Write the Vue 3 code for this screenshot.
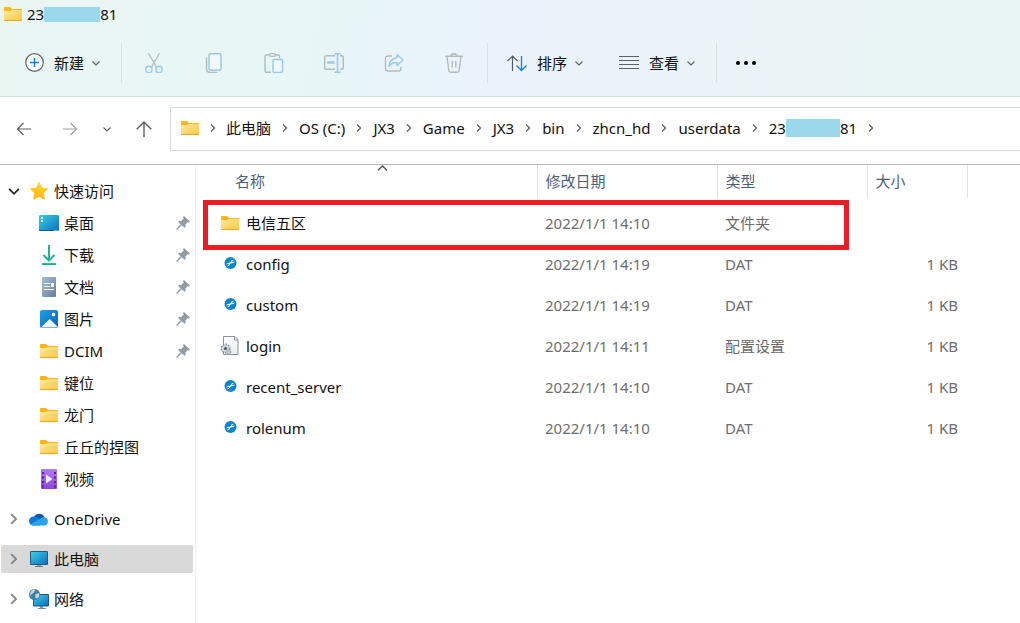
<script setup>
const edits = [
  { icon: 'cut', label: '剪切' },
  { icon: 'copy', label: '复制' },
  { icon: 'paste', label: '粘贴' },
  { icon: 'rename', label: '重命名' },
  { icon: 'share', label: '共享' },
  { icon: 'trash', label: '删除' },
]
const crumbs = ['此电脑', 'OS (C:)', 'JX3', 'Game', 'JX3', 'bin', 'zhcn_hd', 'userdata']
const quick = [
  { icon: 'desktop', name: '桌面', pinned: true },
  { icon: 'download', name: '下载', pinned: true },
  { icon: 'document', name: '文档', pinned: true },
  { icon: 'picture', name: '图片', pinned: true },
  { icon: 'folder', name: 'DCIM', pinned: true },
  { icon: 'folder', name: '键位' },
  { icon: 'folder', name: '龙门' },
  { icon: 'folder', name: '丘丘的捏图' },
  { icon: 'video', name: '视频' },
]
const roots = [
  { icon: 'cloud', name: 'OneDrive' },
  { icon: 'pc', name: '此电脑', active: true },
  { icon: 'network', name: '网络' },
]
const files = [
  { icon: 'folder', name: '电信五区', date: '2022/1/1 14:10', type: '文件夹', size: '' },
  { icon: 'dat', name: 'config', date: '2022/1/1 14:19', type: 'DAT', size: '1 KB' },
  { icon: 'dat', name: 'custom', date: '2022/1/1 14:19', type: 'DAT', size: '1 KB' },
  { icon: 'ini', name: 'login', date: '2022/1/1 14:11', type: '配置设置', size: '1 KB' },
  { icon: 'dat', name: 'recent_server', date: '2022/1/1 14:10', type: 'DAT', size: '1 KB' },
  { icon: 'dat', name: 'rolenum', date: '2022/1/1 14:10', type: 'DAT', size: '1 KB' },
]
</script>

<template>
  <div class="window">
    <svg class="defs" aria-hidden="true">
      <defs>
        <linearGradient id="gFolder" x1="0" y1="0" x2="1" y2="1"><stop offset="0" stop-color="#ffe8a0" /><stop offset="1" stop-color="#fdc83e" /></linearGradient>
        <linearGradient id="gDesk" x1="0" y1="0" x2="1" y2="1"><stop offset="0" stop-color="#37d0de" /><stop offset="1" stop-color="#0f6fc4" /></linearGradient>
        <linearGradient id="gDown" x1="0" y1="0" x2="0" y2="1"><stop offset="0" stop-color="#3cc78c" /><stop offset="1" stop-color="#12a195" /></linearGradient>
        <linearGradient id="gDoc" x1="0" y1="0" x2="1" y2="1"><stop offset="0" stop-color="#a8bdd3" /><stop offset="1" stop-color="#647f9f" /></linearGradient>
        <linearGradient id="gPic" x1="0" y1="0" x2="1" y2="1"><stop offset="0" stop-color="#1f9fe3" /><stop offset="1" stop-color="#0b62b8" /></linearGradient>
        <linearGradient id="gVideo" x1="0" y1="0" x2="0" y2="1"><stop offset="0" stop-color="#b07cf0" /><stop offset="1" stop-color="#8a45dc" /></linearGradient>
        <linearGradient id="gStar" x1="0" y1="0" x2="0" y2="1"><stop offset="0" stop-color="#ffd52b" /><stop offset="1" stop-color="#fdb813" /></linearGradient>
        <linearGradient id="gPage" x1="0" y1="0" x2="1" y2="1"><stop offset="0" stop-color="#ffffff" /><stop offset="1" stop-color="#e8ecf1" /></linearGradient>
      </defs>
      <symbol id="i-folder" viewBox="0 0 20 20">
        <path d="M1 4q0-1 1-1h5l2 2h10v3H1z" fill="#f8b619" />
        <path d="M1 7h6l2-1h10v10q0 1-1 1H2q-1 0-1-1z" fill="url(#gFolder)" />
        <path d="M1 16h18q0 1-1 1H2q-1 0-1-1z" fill="#eaa92a" />
      </symbol>
      <symbol id="i-star" viewBox="0 0 20 20">
        <path d="M10 1.500l2.600 5.600 6 .8-4.400 4.200 1.100 6.100L10 15.200l-5.300 3 1.100-6.100L1.400 7.900l6-.8z" fill="url(#gStar)" stroke="url(#gStar)" stroke-linejoin="round" />
      </symbol>
      <symbol id="i-desktop" viewBox="0 0 20 20">
        <rect y="2" width="20" height="16" rx="1" fill="url(#gDesk)" />
        <path d="M2 4h2v2H2zM2 7h2v2H2z" fill="#d9fbff" />
        <path d="M0 17h15v1H1q-1 0-1-1z" fill="#0f5a91" />
        <path d="M15.500 17.500h1M17.500 17.500h1" stroke="#c4eaff" />
      </symbol>
      <symbol id="i-download" viewBox="0 0 20 20">
        <path d="M10 0v15M4.500 10l5.500 5.500 5.500-5.500" fill="none" stroke="#26b391" stroke-width="2" />
        <rect x="3" y="18" width="14" height="2" fill="url(#gDown)" />
      </symbol>
      <symbol id="i-document" viewBox="0 0 20 20">
        <rect x="3" y="0" width="14" height="20" rx="1" fill="url(#gDoc)" />
        <path d="M5 6.500h6M5 9.500h6M5 12.500h10" stroke="#fff" />
        <rect x="12" y="6" width="3" height="4" fill="#fff" />
      </symbol>
      <symbol id="i-picture" viewBox="0 0 20 20">
        <rect x="1" y="1" width="18" height="18" rx="2" fill="url(#gPic)" />
        <path d="M2 18.500l8-8q.7-.5 1.300 0l7 7-.8 1H3z" fill="#eef8ff" />
        <circle cx="14.500" cy="5.500" r="1.700" fill="#fff" />
      </symbol>
      <symbol id="i-video" viewBox="0 0 20 20">
        <rect x="2" y="0" width="16" height="20" rx="1" fill="url(#gVideo)" />
        <path d="M4 3v16M16 3v16" stroke="#5a219b" stroke-width="2" stroke-dasharray="2 2.500" />
        <path d="M7 5.500l6.500 4.500L7 14.500z" fill="#f4eaff" />
      </symbol>
      <symbol id="i-cloud" viewBox="0 0 20 20">
        <path d="M5 7.500a6 6 0 0 1 10.500.5L10 12z" fill="#0a59ad" />
        <path d="M4.500 16.500a4.500 4.500 0 0 1 0-9q2-.3 4 1l6 4-4 4z" fill="#0f78d4" />
        <path d="M15 8a4.400 4.400 0 0 1 1 8.500H4.500q-2 0-3.200-1.500L11 10q2-2 4-2z" fill="#28a5ea" />
      </symbol>
      <symbol id="i-pc" viewBox="0 0 20 20">
        <path d="M8 15h4v3H8z" fill="#8f9ba5" /><path d="M6 17.500h8" stroke="#6b7780" />
        <rect x="1" y="2" width="18" height="14" rx="1" fill="#27597c" />
        <rect x="2" y="3" width="16" height="12" fill="url(#gDesk)" />
      </symbol>
      <symbol id="i-network" viewBox="0 0 20 20">
        <path d="M11 16h3v3h-3z" fill="#8f9ba5" /><path d="M9 19.500h8" stroke="#7d8992" />
        <rect x="4" y="5" width="16" height="12.500" rx="1" fill="#27597c" />
        <rect x="5" y="6" width="14" height="10.500" fill="url(#gDesk)" />
        <circle cx="5.500" cy="5.500" r="5.500" fill="#437f9f" />
        <path d="M1 4q2-4 5-3.500L5.500 3 3 5 1.500 7zM6 5.500l4-1.500q1 3-1.500 5.500L6.500 9z" fill="#b9d8e4" />
      </symbol>
      <symbol id="i-dat" viewBox="0 0 20 20">
        <circle cx="10.500" cy="9" r="6" fill="#0a84d0" />
        <path d="M8.500 10.200l4-2.400" stroke="#e8f7ff" stroke-width="1.500" />
        <path d="M6.600 10l2-.8 1 1.800-2.200 1M14.400 8l-2 .8-1-1.800 2.200-1" fill="none" stroke="#e8f7ff" stroke-width="1" />
      </symbol>
      <symbol id="i-ini" viewBox="0 0 20 20">
        <path d="M3.500 .5H15l3 3v15H3.500z" fill="url(#gPage)" stroke="#8e9297" />
        <path d="M14.500 .5v3.500H18" fill="none" stroke="#8e9297" />
        <circle cx="5.500" cy="12.500" r="4" fill="#d3dade" stroke="#899298" stroke-width="2" stroke-dasharray="1.600 1" />
        <circle cx="5.500" cy="12.500" r="3.500" fill="#cbd4da" />
        <circle cx="5.500" cy="12.500" r="1.500" fill="#4b565e" />
        <circle cx="9" cy="16" r="2" fill="#c2cbd1" stroke="#899298" stroke-dasharray="1 1" />
      </symbol>
      <symbol id="i-pin" viewBox="0 0 14 14">
        <path d="M8 0l6 5.500-1 1-1.500-.2-2 2.200q.5 2-.5 3.500L5.700 9.300 1.500 13.500 0 14l.6-1.500 4-4.300L2 5.500Q3.500 4.300 5.500 4.800L7.700 2.500 7.200 1z" fill="#919ca4" />
      </symbol>
      <symbol id="i-down" viewBox="0 0 10 10"><path d="M1.500 3.500L5 7l3.500-3.500" fill="none" stroke="currentColor" stroke-width="1.200" /></symbol>
      <symbol id="i-right" viewBox="0 0 10 10"><path d="M3 1.500L6.500 5 3 8.500" fill="none" stroke="currentColor" stroke-width="1.300" /></symbol>
      <symbol id="i-add" viewBox="0 0 20 20">
        <circle cx="10.500" cy="9.500" r="8.800" fill="#fafdff" stroke="#606466" stroke-width="1.200" />
        <path d="M6 9.500h9M10.500 5v9" stroke="#1080dd" stroke-width="1.500" />
      </symbol>
      <symbol id="i-cut" viewBox="0 0 20 20">
        <path d="M4.500 .5l8 13.500M15.500 .5l-8 13.500" stroke="#b3bbbc" stroke-width="1.300" />
        <circle cx="4.800" cy="16.500" r="3.200" fill="none" stroke="#94c9ec" stroke-width="1.400" />
        <circle cx="15" cy="16.500" r="3.200" fill="none" stroke="#94c9ec" stroke-width="1.400" />
      </symbol>
      <symbol id="i-copy" viewBox="0 0 20 20">
        <path d="M2.500 4.500v11q0 4 4 4h7" fill="none" stroke="#b3bbbc" stroke-width="1.400" />
        <rect x="5" y=".7" width="12" height="16.500" rx="2" fill="#f2f8fa" stroke="#94c9ec" stroke-width="1.400" />
      </symbol>
      <symbol id="i-paste" viewBox="0 0 20 20">
        <path d="M6 2H2.500Q1 2 1 3.500v14.300q0 1.500 1.500 1.500H7M12 2h2q1.500 0 1.500 1.500V5" fill="none" stroke="#b3bbbc" stroke-width="1.400" />
        <rect x="5.500" y=".7" width="6" height="2.600" rx="1.300" fill="#e8f5f7" stroke="#b3bbbc" stroke-width="1.300" />
        <rect x="9" y="6.500" width="9.500" height="13" rx="1.500" fill="#f2f8fa" stroke="#94c9ec" stroke-width="1.400" />
      </symbol>
      <symbol id="i-rename" viewBox="0 0 20 20">
        <path d="M11 2.700H2.500Q.7 2.700.7 4.500v10q0 1.800 1.800 1.800H11M16 2.700h1.500q1.800 0 1.800 1.800v10q0 1.800-1.800 1.800H16" fill="none" stroke="#b3bbbc" stroke-width="1.400" />
        <path d="M3 9.500h7.500" stroke="#94c9ec" stroke-width="2.500" />
        <path d="M13.500 1v18M10.500 .7h6M10.500 19.300h6" stroke="#94c9ec" stroke-width="1.500" />
      </symbol>
      <symbol id="i-share" viewBox="0 0 20 20">
        <path d="M8 3H4Q1.500 3 1.500 5.500v10Q1.500 18 4 18h10.500q2.500 0 2.500-2.500V14" fill="none" stroke="#b3bbbc" stroke-width="1.400" />
        <path d="M13 1.500l6 5.500-6 5.500V9.500q-5-.5-8 4Q5.500 6 13 4.700z" fill="#f0f8fd" stroke="#94c9ec" stroke-width="1.400" stroke-linejoin="round" />
      </symbol>
      <symbol id="i-trash" viewBox="0 0 20 20">
        <path d="M1 3.200h18M7 3q0-2.300 3-2.300T13 3M3 3.500l1.800 14q.2 1.800 2 1.800h6.400q1.800 0 2-1.800l1.800-14M8.200 8v6.500M11.800 8v6.500" fill="none" stroke="#b3bbbc" stroke-width="1.400" />
      </symbol>
      <symbol id="i-sort" viewBox="0 0 20 20">
        <path d="M5.500 18V3M.5 8l5-5 5 5" fill="none" stroke="#555a5e" stroke-width="1.200" />
        <path d="M14.500 3v14.500M9.500 12.500l5 5 5-5" fill="none" stroke="#1080dd" stroke-width="1.300" />
      </symbol>
      <symbol id="i-view" viewBox="0 0 20 20"><path d="M0 3.500h20M0 7.500h20M0 11.500h20M0 15.500h20" stroke="#5b6064" stroke-width="1.200" /></symbol>
      <symbol id="i-more" viewBox="0 0 20 20"><circle cx="2" cy="10" r="2" /><circle cx="10" cy="10" r="2" /><circle cx="18" cy="10" r="2" /></symbol>
      <symbol id="i-back" viewBox="0 0 16 16"><path d="M15 8H1.500M7.500 2l-6 6 6 6" fill="none" stroke="currentColor" stroke-width="1.200" /></symbol>
      <symbol id="i-forward" viewBox="0 0 16 16"><path d="M1 8h13.500M8.500 2l6 6-6 6" fill="none" stroke="currentColor" stroke-width="1.200" /></symbol>
      <symbol id="i-up" viewBox="0 0 16 16"><path d="M8 16V1M.7 8.300L8 1l7.300 7.300" fill="none" stroke="currentColor" stroke-width="1.400" /></symbol>
    </svg>

    <header class="top">
      <div class="title">
        <svg class="icon"><use href="#i-folder" /></svg>
        <span class="masked">23<i class="mask wide"></i>81</span>
      </div>
      <div class="toolbar">
        <button class="command"><svg class="icon"><use href="#i-add" /></svg>新建<svg class="chev"><use href="#i-down" /></svg></button>
        <span class="sep"></span>
        <div class="edits">
          <button v-for="e in edits" :key="e.icon" class="edit" :aria-label="e.label" disabled>
            <svg class="icon"><use :href="'#i-' + e.icon" /></svg>
          </button>
        </div>
        <span class="sep"></span>
        <button class="command"><svg class="icon"><use href="#i-sort" /></svg>排序<svg class="chev"><use href="#i-down" /></svg></button>
        <button class="command view"><svg class="icon"><use href="#i-view" /></svg>查看<svg class="chev"><use href="#i-down" /></svg></button>
        <span class="sep"></span>
        <button class="command" aria-label="更多"><svg class="icon"><use href="#i-more" /></svg></button>
      </div>
    </header>

    <nav class="nav">
      <div class="travel">
        <button aria-label="后退" class="back"><svg class="arrow"><use href="#i-back" /></svg></button>
        <button aria-label="前进" class="faint"><svg class="arrow"><use href="#i-forward" /></svg></button>
        <button aria-label="最近位置"><svg class="chev"><use href="#i-down" /></svg></button>
        <button aria-label="向上"><svg class="arrow"><use href="#i-up" /></svg></button>
      </div>
      <div class="address">
        <svg class="icon"><use href="#i-folder" /></svg>
        <svg class="chev first"><use href="#i-right" /></svg>
        <template v-for="(c, i) in crumbs" :key="i">
          <a href="#">{{ c }}</a>
          <svg class="chev"><use href="#i-right" /></svg>
        </template>
        <a href="#" class="masked">23<i class="mask"></i>81</a>
        <svg class="chev"><use href="#i-right" /></svg>
      </div>
    </nav>

    <div class="body">
      <aside class="side">
        <a href="#" class="root quick"><svg class="chev dark"><use href="#i-down" /></svg><svg class="icon"><use href="#i-star" /></svg>快速访问</a>
        <a v-for="q in quick" :key="q.name" href="#" class="item">
          <svg class="icon"><use :href="'#i-' + q.icon" /></svg>
          <span class="label">{{ q.name }}</span>
          <svg v-if="q.pinned" class="pin"><use href="#i-pin" /></svg>
        </a>
        <a v-for="r in roots" :key="r.name" href="#" class="root" :class="{ active: r.active }">
          <svg class="chev"><use href="#i-right" /></svg><svg class="icon"><use :href="'#i-' + r.icon" /></svg>{{ r.name }}
        </a>
      </aside>

      <main class="pane">
        <table>
          <colgroup><col class="c-name" /><col class="c-date" /><col class="c-type" /><col class="c-size" /><col /></colgroup>
          <thead>
            <tr>
              <th class="name">名称<svg class="chev sorted"><use href="#i-down" /></svg></th>
              <th>修改日期</th>
              <th>类型</th>
              <th>大小</th>
              <td></td>
            </tr>
          </thead>
          <tbody>
            <tr v-for="f in files" :key="f.name">
              <td class="name"><div class="file"><svg class="icon"><use :href="'#i-' + f.icon" /></svg>{{ f.name }}</div></td>
              <td>{{ f.date }}</td>
              <td>{{ f.type }}</td>
              <td class="size">{{ f.size }}</td>
              <td></td>
            </tr>
          </tbody>
        </table>
        <div class="marker"></div>
      </main>
    </div>
  </div>
</template>

<style>
body { margin: 0; background: #fff; }
</style>

<style scoped>
* { box-sizing: border-box; }
.window {
  min-height: 100vh;
  display: flex;
  flex-direction: column;
  overflow: hidden;
  background: #fff;
  color: #111;
  font: 15px/20px "Noto Sans", "Noto Sans CJK SC", sans-serif;
}
.defs { position: absolute; width: 0; height: 0; }
svg { display: block; flex: none; }
.icon { width: 20px; height: 20px; }
.arrow { width: 16px; height: 16px; }
.chev { width: 10px; height: 10px; color: #5c6063; }
a { color: inherit; text-decoration: none; }
button { display: flex; align-items: center; padding: 0; border: 0; background: none; color: inherit; font: inherit; }

.top {
  border-bottom: 1px solid #d5dfe0;
  background: linear-gradient(100deg, #ebf6f3 0%, #e7f6f6 28%, #eaf3fb 46%, #ebf3f8 72%, #e8f5f3 100%);
}
.title { display: flex; align-items: center; gap: 4px; height: 28px; padding-left: 3px; }
.masked { display: flex; align-items: center; }
.mask { width: 54px; height: 18px; background: #9bd9ea; }
.mask.wide { width: 56px; height: 15px; }
.toolbar { display: flex; align-items: center; height: 68px; padding: 2px 0 0 24px; }
.command { gap: 10px; }
.command .chev { margin-left: -3px; }
.view { margin-left: 35px; }
.sep { width: 1px; height: 40px; margin: 0 19px 0 20px; background: #d7e1e3; }
.edits { display: flex; margin: 0 -17px; }
.edit { justify-content: center; width: 60px; height: 40px; }

.nav { display: flex; padding: 10px 0 13px; border-bottom: 1px solid #bbb; }
.travel { display: flex; align-items: center; gap: 24px; margin: 0 18px 0 16px; color: #5c6063; }
.back { margin-right: 6px; }
.faint { color: #a0a0a0; }
.address { flex: 1; display: flex; align-items: center; gap: 9px; height: 44px; padding: 0 0 2px 9px; border: 1px solid #d9d9d9; border-right: 0; white-space: nowrap; }
.address .first { margin: 0 -1px; }

.body { flex: 1; display: flex; }
.side { flex: none; width: 196px; padding: 10px 2px 10px 1px; border-right: 1px solid #f0f0f0; }
.root { display: flex; align-items: center; height: 28px; margin-top: 12px; padding-left: 6px; border-radius: 2px; }
.root .icon { margin: 0 5px 0 8px; }
.root .chev { width: 14px; height: 14px; color: #858585; }
.root .dark { color: #222; }
.quick { height: 32px; margin-top: 0; }
.active { background: #d9d9d9; }
.item { display: flex; align-items: center; gap: 5px; height: 32px; padding: 0 3px 0 38px; }
.label { flex: 1; }
.pin { width: 14px; height: 14px; }
.item + .root { margin-top: 10px; }

.pane { flex: 1; min-width: 0; position: relative; }
table { width: 100%; table-layout: fixed; border-collapse: collapse; }
.c-name { width: 341px; }
.c-date { width: 180px; }
.c-type { width: 150px; }
.c-size { width: 100px; }
th, td { padding: 0 9px 0 8px; text-align: left; font-weight: 400; white-space: nowrap; }
th { position: relative; height: 33px; padding-bottom: 2px; border-right: 1px solid #e2e2e2; color: #4c607a; }
tbody { color: #6d6d6d; }
tbody tr { height: 41px; }
tbody::before { content: ""; display: block; height: 4px; }
th.name { padding-left: 39px; }
td.name { padding-left: 24px; color: #111; }
.file { display: flex; align-items: center; gap: 6px; }
.size { text-align: right; }
.sorted { position: absolute; left: 180px; top: -3px; width: 13px; height: 13px; transform: rotate(180deg); }
.marker { position: absolute; left: 7px; top: 35px; width: 646px; height: 50px; border: 5px solid #ed1c24; }
</style>
